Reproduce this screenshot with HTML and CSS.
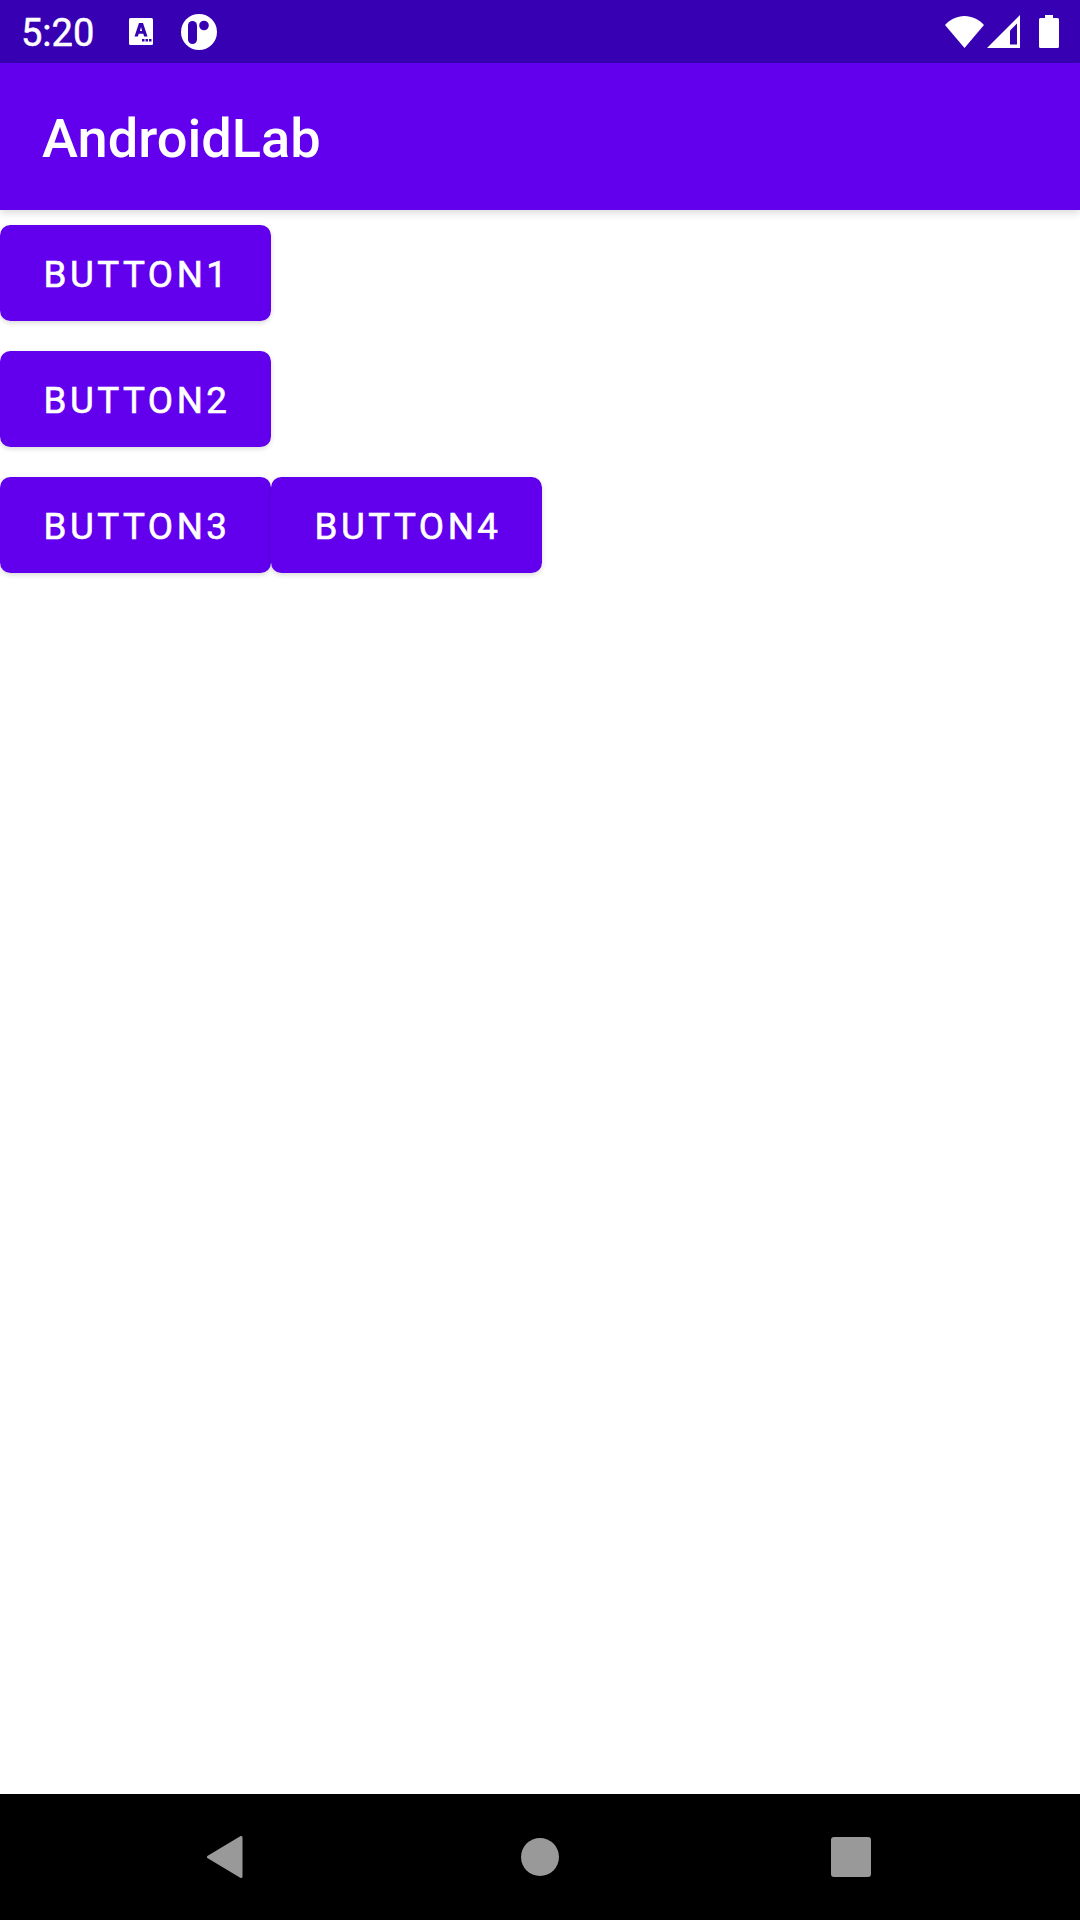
FILE: index.html
```html
<!DOCTYPE html>
<html lang="en">
<head>
    <meta charset="UTF-8">
    <meta name="viewport" content="width=device-width, initial-scale=1.0">
    <title>AndroidLab</title>
    <link rel="stylesheet" href="styles.css">
</head>
<body>
    <div class="status-bar">
        <span class="status-time">5:20</span>
        <svg class="status-a" width="24" height="27" viewBox="0 0 24 27">
            <rect width="24" height="27" rx="1.5" fill="#fff"/>
            <path d="M5.5 18.5L10 5h4l4.500 13.500h-3.400l-.8-2.800h-4.600l-.8 2.800zM10.900 13h2.200L12 9z" fill="#3700B3" fill-rule="evenodd"/>
            <path d="M13 21h2.500v2.500H13zM16.500 21H19v2.500h-2.500zM20 21h2.500v2.500H20z" fill="#3700B3"/>
        </svg>
        <svg class="status-circle" width="36" height="36" viewBox="0 0 36 36">
            <circle cx="18" cy="18" r="18" fill="#fff"/>
            <rect x="7" y="7" width="9" height="23" rx="4.500" fill="#3700B3"/>
            <circle cx="23" cy="11.500" r="4.800" fill="#3700B3"/>
        </svg>
        <div class="status-right">
            <svg class="status-wifi" width="39" height="32" viewBox="0 0 39 32">
                <path d="M0 9C5 3.500 12 0 19.500 0S34 3.500 39 9L19.500 32z" fill="#fff"/>
            </svg>
            <svg class="status-signal" width="33" height="33" viewBox="0 0 33 33">
                <path d="M33 0v33H0z" fill="#fff"/>
                <path d="M23 15.500L30 8.500V29.500H23z" fill="#3700B3"/>
            </svg>
            <svg class="status-battery" width="20" height="33" viewBox="0 0 20 33">
                <path d="M6 0h8v3h4.500a1.500 1.500 0 0 1 1.500 1.500V31.500a1.500 1.500 0 0 1-1.500 1.500H1.500A1.500 1.500 0 0 1 0 31.500V4.500A1.500 1.500 0 0 1 1.500 3H6z" fill="#fff"/>
            </svg>
        </div>
    </div>

    <div class="app-bar">AndroidLab</div>

    <div class="content">
        <div class="btn-row"><button class="btn">Button1</button></div>
        <div class="btn-row"><button class="btn">Button2</button></div>
        <div class="btn-row">
            <button class="btn">Button3</button>
            <button class="btn">Button4</button>
        </div>
    </div>

    <div class="nav-bar">
        <svg class="nav-back" width="36" height="42" viewBox="0 0 36 42">
            <path d="M34 1.500v39L1.500 21z" fill="#999" stroke="#999" stroke-width="3" stroke-linejoin="round"/>
        </svg>
        <span class="nav-home"></span>
        <span class="nav-square"></span>
    </div>
</body>
</html>
```

FILE: styles.css
```css
* {
    box-sizing: border-box;
}
body {
    margin: 0;
    width: 1080px;
    height: 1920px;
    display: flex;
    flex-direction: column;
    background-color: #fff;
    font-family: Roboto, sans-serif;
}
.status-bar {
    height: 63px;
    flex-shrink: 0;
    display: flex;
    align-items: center;
    padding: 0 21px;
    background-color: #3700B3;
    color: #fff;
}
.status-time {
    width: 108px;
    font-size: 38px;
    -webkit-text-stroke: 0.5px #fff;
    margin-top: 2px;
}
.status-a {
    margin-right: 28px;
}
.status-right {
    margin-left: auto;
    display: flex;
    align-items: center;
}
.status-wifi {
    margin-right: 3px;
}
.status-signal {
    margin-right: 19px;
}
.app-bar {
    height: 147px;
    flex-shrink: 0;
    display: flex;
    align-items: center;
    padding: 4px 0 0 42px;
    background-color: #6200EE;
    color: #fff;
    font-size: 54.200px;
    font-weight: 500;
    box-shadow: 0 3px 8px rgba(0, 0, 0, 0.15);
    position: relative;
}
.content {
    flex: 1;
    padding-top: 15px;
}
.btn-row {
    display: flex;
    margin-bottom: 30px;
}
.btn {
    width: 271px;
    height: 96px;
    padding: 2px 0 0 3px;
    border: none;
    border-radius: 10.500px;
    background-color: #6200EE;
    color: #fff;
    font-family: Roboto, sans-serif;
    font-size: 36.750px;
    font-weight: 400;
    -webkit-text-stroke: 0.6px #fff;
    letter-spacing: 3.500px;
    text-transform: uppercase;
    box-shadow: 0 2px 5px rgba(0, 0, 0, 0.15);
}
.nav-bar {
    height: 126px;
    flex-shrink: 0;
    display: flex;
    align-items: center;
    background-color: #000;
    padding-left: 207px;
}
.nav-back {
    margin-right: 278px;
}
.nav-home {
    width: 38px;
    height: 38px;
    margin-right: 272px;
    border-radius: 50%;
    background-color: #999;
}
.nav-square {
    width: 40px;
    height: 40px;
    border-radius: 3px;
    background-color: #999;
}
```
